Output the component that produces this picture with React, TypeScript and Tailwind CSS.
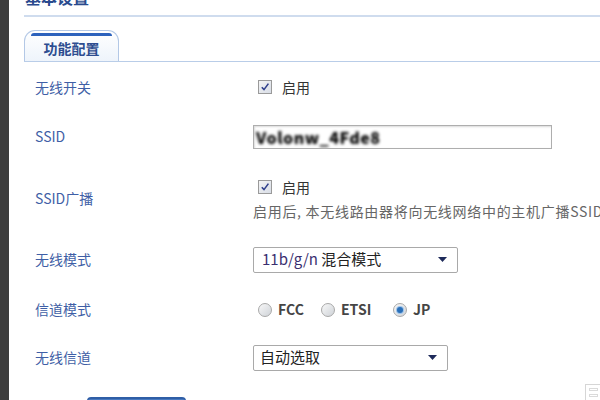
import React from "react";

const font = { fontFamily: '"Noto Sans CJK SC", "Noto Sans", sans-serif' };

function Check() {
  return (
    <span className="inline-flex w-[14px] h-[14px] border border-[#9a9a9a] bg-gradient-to-br from-[#f4f4f4] to-[#d8dde6] items-center justify-center shrink-0">
      <svg width="10" height="10" viewBox="0 0 10 10">
        <path d="M1.8 5.2 L4 7.6 L8.4 1.6" fill="none" stroke="#2f3f8c" strokeWidth="1.6" />
      </svg>
    </span>
  );
}

function Radio({ on }: { on?: boolean }) {
  return (
    <span className="inline-flex w-[14px] h-[14px] rounded-full border border-[#a8a8a8] bg-gradient-to-br from-[#f8f8f8] to-[#cfd3d8] items-center justify-center shrink-0">
      {on && <span className="w-[6px] h-[6px] rounded-full bg-[#2a6fb8] ring-1 ring-[#9cc3ea]" />}
    </span>
  );
}

function Arrow() {
  return (
    <svg width="9" height="5" viewBox="0 0 9 5">
      <path d="M0 0 H9 L4.5 5 Z" fill="#1e2a5a" />
    </svg>
  );
}

function Row({ label, h, children }: { label: string; h: string; children: React.ReactNode }) {
  return (
    <div className={`flex items-center ${h}`}>
      <div className="w-[229px] pl-[11px] text-[14px] text-[#3f5fa6] shrink-0">{label}</div>
      <div className="flex-1 min-w-0">{children}</div>
    </div>
  );
}

export default function App() {
  return (
    <div className="w-[600px] h-[400px] overflow-hidden flex bg-white" style={font}>
      <div className="w-[9px] h-full bg-[#3d3d3d] shrink-0" />
      <div className="flex-1 min-w-0 relative pl-[15px]">
        <div className="h-[17px] border-b-2 border-[#cfdcee] overflow-hidden">
          <div className="-mt-[14px] pl-[1px] text-[16px] font-bold text-[#2a4a8e] leading-[22px]">基本设置</div>
        </div>
        <div className="mt-[13px] border-b border-[#b9cde8] flex">
          <div className="w-[95px] h-[31px] rounded-t-[11px] border border-b-0 border-[#b3c8e6] bg-gradient-to-b from-white to-[#eef4fb] relative flex items-center justify-center">
            <div className="absolute left-[6px] right-[6px] top-[2px] h-[3px] rounded-t-[8px] bg-[#2c62bd]" />
            <span className="mt-[4px] text-[14px] font-bold text-[#2d4d90]">功能配置</span>
          </div>
        </div>
        <Row label="无线开关" h="h-[50px]">
          <div className="flex items-center gap-[10px] pl-[5px]">
            <Check />
            <span className="text-[14px] text-[#333]">启用</span>
          </div>
        </Row>
        <Row label="SSID" h="h-[49px]">
          <div className="w-[299px] h-[24px] border border-[#aeaeae] shadow-[inset_1px_1px_2px_rgba(0,0,0,0.15)] flex items-center px-[2px] overflow-hidden">
            <span className="text-[16px] font-black text-black blur-[1.4px] tracking-[0.5px]">Volonw_4Fde8</span>
          </div>
        </Row>
        <Row label="SSID广播" h="h-[74px]">
          <div className="flex flex-col">
            <div className="h-[26px] flex items-center gap-[10px] pl-[5px]">
              <Check />
              <span className="text-[14px] text-[#333]">启用</span>
            </div>
            <div className="h-[22px] flex items-center whitespace-nowrap text-[14px] text-[#666] tracking-[0.7px]">
              启用后, 本无线路由器将向无线网络中的主机广播SSID
            </div>
          </div>
        </Row>
        <Row label="无线模式" h="h-[49px]">
          <div className="w-[205px] h-[26px] border border-[#a9a9a9] rounded-[2px] flex items-center justify-between pl-[8px] pr-[10px]">
            <span className="text-[15px] text-[#222]">
              <span className="text-[#3a2f70]">11b/g/n</span> 混合模式
            </span>
            <Arrow />
          </div>
        </Row>
        <Row label="信道模式" h="h-[51px]">
          <div className="flex items-center pl-[5px] text-[14px] font-bold text-[#454545]">
            <Radio />
            <span className="ml-[6px] w-[43px]">FCC</span>
            <Radio />
            <span className="ml-[6px] w-[52px]">ETSI</span>
            <Radio on />
            <span className="ml-[6px]">JP</span>
          </div>
        </Row>
        <Row label="无线信道" h="h-[45px]">
          <div className="w-[195px] h-[26px] border border-[#a9a9a9] rounded-[2px] flex items-center justify-between pl-[6px] pr-[10px]">
            <span className="text-[15px] text-[#222]">自动选取</span>
            <Arrow />
          </div>
        </Row>
        <div className="pl-[63px] mt-[17px]">
          <div className="w-[99px] h-[10px] rounded-t-[4px] border-t-2 border-x border-[#2f5ea6] bg-[#4a7ac0]" />
        </div>
        <div className="absolute right-[-2px] bottom-[-4px] w-[17px] h-[20px] border border-[#d6d6d6] bg-white flex flex-col gap-[3px] p-[3px]">
          <div className="h-[3px] border border-[#dadada]" />
          <div className="h-[3px] border border-[#dadada]" />
        </div>
      </div>
    </div>
  );
}
